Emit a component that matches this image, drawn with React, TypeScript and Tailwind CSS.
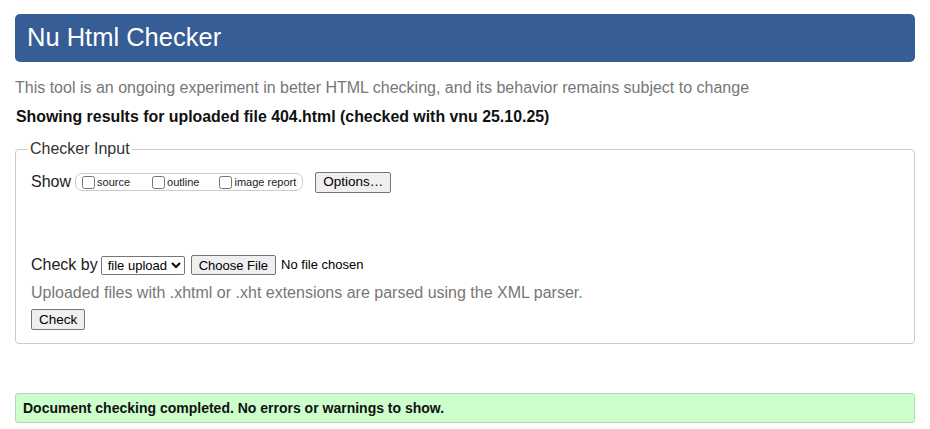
import React from "react"

export default function App() {
  return (
    <div className="min-h-screen bg-white px-[15px] pt-[14px] font-['Liberation_Sans',Arial,sans-serif] text-[#222]">
      {/* Header */}
      <header className="h-[48px] rounded-[5px] bg-[#365d95] px-[12px] flex items-center">
        <h1 className="text-[25.5px] text-white leading-none">Nu Html Checker</h1>
      </header>

      <p className="mt-[17px] text-[16px] text-[#777] leading-[18px]">
        This tool is an ongoing experiment in better HTML checking, and its behavior remains subject to change
      </p>
      <p className="mt-[11px] ml-[1px] text-[15.9px] font-bold text-[#111] leading-[18px]">
        Showing results for uploaded file 404.html (checked with vnu 25.10.25)
      </p>

      {/* Checker input */}
      <fieldset className="mt-[14px] border border-[#ccc] rounded-[4px] px-[15px] pb-[12px] pt-[10px] h-[204px]">
        <legend className="px-[2px] ml-[-3px] text-[16px] text-[#333] leading-[18px]">Checker Input</legend>

        <div className="flex items-center h-[22px] mt-[3px]">
          <span className="text-[16px] mr-[4px]">Show</span>
          <div className="flex items-center h-[18px] border border-[#ccc] rounded-[7px] pl-[6px] pr-[6px] text-[11px]">
            <label className="flex items-center">
              <input type="checkbox" className="w-[13px] h-[13px] mr-[2px]" />
              source
            </label>
            <label className="flex items-center ml-[22px]">
              <input type="checkbox" className="w-[13px] h-[13px] mr-[2px]" />
              outline
            </label>
            <label className="flex items-center ml-[20px]">
              <input type="checkbox" className="w-[13px] h-[13px] mr-[2px]" />
              image report
            </label>
          </div>
          <button className="ml-[12px] h-[21px] px-[7px] bg-[#efefef] border border-[#767676] rounded-[2px] text-[13.5px] text-black leading-none">
            Options…
          </button>
        </div>

        <div className="flex items-center h-[22px] mt-[61px]">
          <span className="text-[16px] mr-[3px]">Check by</span>
          <select className="h-[19px] w-[84px] border border-[#767676] rounded-[2px] text-[13px] text-black leading-none pl-[2px]">
            <option>file upload</option>
          </select>
          <button className="ml-[6px] h-[20px] px-[7px] bg-[#efefef] border border-[#767676] rounded-[2px] text-[13px] text-black leading-none">
            Choose File
          </button>
          <span className="ml-[5px] text-[13px] text-black">No file chosen</span>
        </div>

        <p className="mt-[8px] text-[16px] text-[#777] leading-[18px]">
          Uploaded files with .xhtml or .xht extensions are parsed using the XML parser.
        </p>

        <button className="mt-[7px] h-[21px] px-[7px] bg-[#efefef] border border-[#767676] rounded-[2px] text-[13.5px] text-black leading-none">
          Check
        </button>
      </fieldset>

      {/* Result */}
      <div className="mt-[49px] h-[30px] flex items-center px-[7px] bg-[#ccffcc] border border-[#b5d9b5] rounded-[3px]">
        <p className="text-[14px] font-bold text-[#111]">Document checking completed. No errors or warnings to show.</p>
      </div>
    </div>
  )
}
